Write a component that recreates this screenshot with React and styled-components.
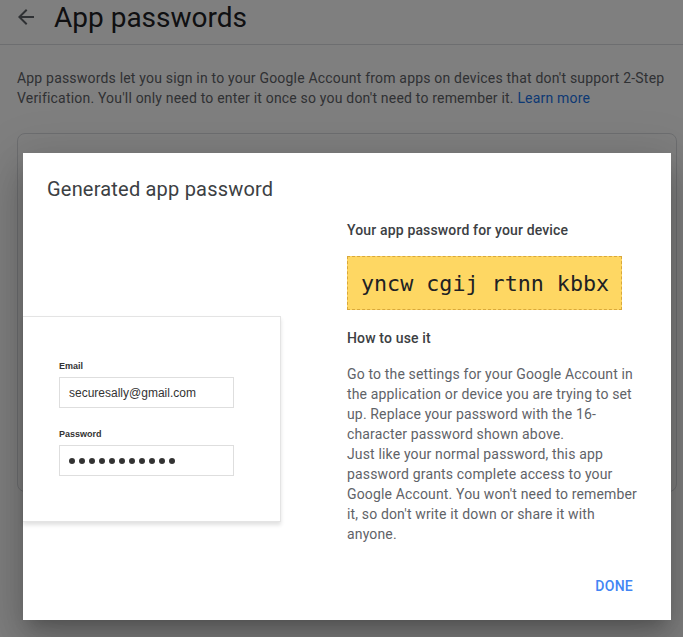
import React from "react";
import styled, { createGlobalStyle } from "styled-components";

const GlobalStyle = createGlobalStyle`
  html, body { margin: 0; padding: 0; background: #ffffff; }
  body { font-family: Roboto, "Noto Sans", Arial, sans-serif; color: #202124; overflow: hidden; }
  * { box-sizing: border-box; }
`;

const Page = styled.div`
  width: 683px;
  height: 637px;
  position: relative;
  overflow: hidden;
`;

const Header = styled.header`
  display: flex;
  align-items: flex-start;
  gap: 16px;
  height: 45px;
  padding: 1px 0 0 14px;
  border-bottom: 1px solid #dadce0;
`;

const BackIcon = styled.svg`
  width: 24px;
  height: 24px;
  margin-top: 4px;
  fill: #5f6368;
  flex: none;
`;

const PageTitle = styled.h1`
  margin: 0;
  font-size: 28px;
  line-height: 34px;
  font-weight: 400;
  color: #202124;
`;

const Content = styled.main`
  padding: 23px 6px 0 17px;
`;

const Description = styled.p`
  margin: 0;
  font-size: 14px;
  line-height: 20px;
  letter-spacing: 0.19px;
  color: #5f6368;
`;

const Link = styled.a`
  color: #1a73e8;
  text-decoration: none;
`;

const Card = styled.section`
  margin-top: 25px;
  height: 359px;
  border: 1px solid #dadce0;
  border-radius: 8px;
`;

const Scrim = styled.div`
  position: absolute;
  inset: 0;
  background: rgba(0, 0, 0, 0.5);
`;

const Dialog = styled.div`
  position: absolute;
  left: 23px;
  top: 153px;
  width: 648px;
  height: 467px;
  background: #ffffff;
  padding-top: 22px;
  display: flex;
  flex-direction: column;
  box-shadow: 0 11px 15px -7px rgba(0, 0, 0, 0.2), 0 24px 38px 3px rgba(0, 0, 0, 0.14),
    0 9px 46px 8px rgba(0, 0, 0, 0.12);
`;

const DialogTitle = styled.h2`
  margin: 0;
  padding: 0 24px;
  font-size: 20px;
  line-height: 28px;
  font-weight: 400;
  letter-spacing: 0.2px;
  color: #3c4043;
`;

const DialogBody = styled.div`
  display: grid;
  grid-template-columns: 258px 296px;
  column-gap: 66px;
  margin-top: 17px;
`;

const Illustration = styled.div`
  margin-top: 96px;
  width: 258px;
  height: 206px;
  background: #fff;
  border: 1px solid #e4e4e4;
  border-left: none;
  box-shadow: 0 3px 4px rgba(0, 0, 0, 0.12);
  padding: 43px 0 0 36px;
  font-family: "Liberation Sans", Arial, sans-serif;
`;

const FieldLabel = styled.div`
  font-size: 9px;
  line-height: 12px;
  font-weight: 700;
  color: #333;
  margin-top: ${(p) => p.$gap || 0}px;
`;

const MockInput = styled.div`
  margin-top: 5px;
  width: 175px;
  height: 31px;
  border: 1px solid #dedede;
  display: flex;
  align-items: center;
  padding-left: 9px;
  font-size: 12px;
  color: #333;
  gap: 4px;
`;

const Dot = styled.span`
  width: 6px;
  height: 6px;
  border-radius: 50%;
  background: #333;
`;

const RightCol = styled.div`
  display: flex;
  flex-direction: column;
`;

const Heading = styled.h3`
  margin: 0;
  font-size: 14px;
  line-height: 20px;
  font-weight: 500;
  letter-spacing: 0.15px;
  color: #3c4043;
  margin-top: ${(p) => p.$top || 0}px;
`;

const PasswordBox = styled.div`
  margin-top: 16px;
  width: 275px;
  height: 54px;
  background: #fed763;
  border: 1px dashed #d9a83a;
  display: flex;
  align-items: center;
  padding-left: 13px;
  font-family: "DejaVu Sans Mono", "Liberation Mono", monospace;
  font-size: 21.7px;
  color: #202124;
  white-space: pre;
`;

const Instructions = styled.p`
  margin: 16px 0 0;
  font-size: 14px;
  line-height: 20px;
  letter-spacing: 0.15px;
  color: #5f6368;
`;

const Footer = styled.div`
  display: flex;
  justify-content: flex-end;
  padding: 0 30px;
  margin-top: 24px;
`;

const TextButton = styled.button`
  height: 36px;
  padding: 0 8px;
  border: none;
  background: transparent;
  font-family: Roboto, Arial, sans-serif;
  font-size: 14px;
  font-weight: 500;
  letter-spacing: 0.25px;
  text-transform: uppercase;
  color: #4285f4;
  cursor: pointer;
`;

export default function App() {
  return (
    <>
      <GlobalStyle />
      <Page>
        <Header>
          <BackIcon viewBox="0 0 24 24">
            <path d="M20 11H7.83l5.59-5.59L12 4l-8 8 8 8 1.41-1.41L7.83 13H20v-2z" />
          </BackIcon>
          <PageTitle>App passwords</PageTitle>
        </Header>
        <Content>
          <Description>
            App passwords let you sign in to your Google Account from apps on devices that don't
            support 2-Step Verification. You'll only need to enter it once so you don't need to
            remember it. <Link href="#">Learn more</Link>
          </Description>
          <Card />
        </Content>
        <Scrim />
        <Dialog role="dialog">
          <DialogTitle>Generated app password</DialogTitle>
          <DialogBody>
            <div>
              <Illustration>
                <FieldLabel>Email</FieldLabel>
                <MockInput>securesally@gmail.com</MockInput>
                <FieldLabel $gap={20}>Password</FieldLabel>
                <MockInput>
                  {Array.from({ length: 11 }).map((_, i) => (
                    <Dot key={i} />
                  ))}
                </MockInput>
              </Illustration>
            </div>
            <RightCol>
              <Heading>Your app password for your device</Heading>
              <PasswordBox>yncw cgij rtnn kbbx</PasswordBox>
              <Heading $top={18}>How to use it</Heading>
              <Instructions>
                Go to the settings for your Google Account in the application or device you are
                trying to set up. Replace your password with the 16-character password shown above.
                <br />
                Just like your normal password, this app password grants complete access to your
                Google Account. You won't need to remember it, so don't write it down or share it
                with anyone.
              </Instructions>
            </RightCol>
          </DialogBody>
          <Footer>
            <TextButton>Done</TextButton>
          </Footer>
        </Dialog>
      </Page>
    </>
  );
}
